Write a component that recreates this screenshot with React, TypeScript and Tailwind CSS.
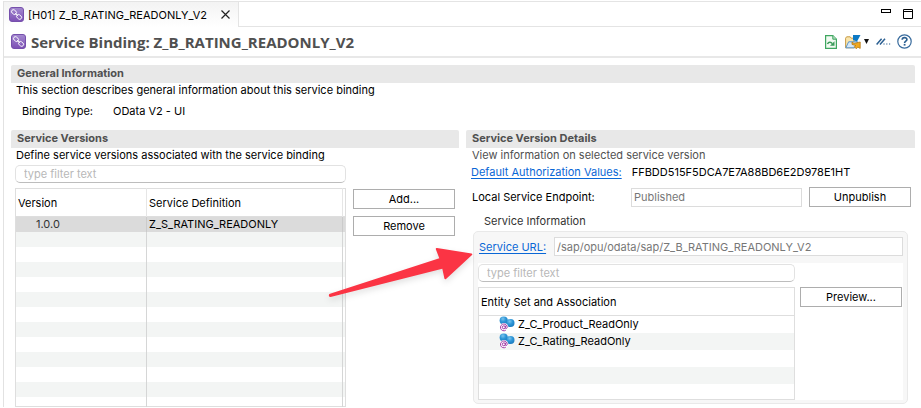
import React from "react";

const BUTTON =
  "flex h-5 w-[102px] shrink-0 items-center justify-center border border-[#adadad] bg-white text-[11px] leading-4 text-black";
const LINK = "shrink-0 text-[#0a67d6] underline underline-offset-2";
const SEARCH =
  "block h-[18px] w-full rounded-[5px] border border-[#e2e2e2] border-b-[#bdbdbd] bg-white px-2 text-[11px] leading-4 text-black placeholder:text-[#b8b8b8]";
const FIELD = "h-[19px] min-w-0 border border-[#dcdcdc] bg-white px-0.5 text-[11px] leading-4 text-[#777]";

function BindingIcon() {
  return (
    <svg width="15" height="15" viewBox="0 0 15 15" className="shrink-0" aria-hidden="true">
      <defs>
        <linearGradient id="violet" x1="0" y1="0" x2="0" y2="1">
          <stop offset="0" stopColor="#a48ad0" />
          <stop offset="1" stopColor="#7c4fb4" />
        </linearGradient>
      </defs>
      <rect x="0.5" y="0.5" width="14" height="14" rx="2.5" fill="url(#violet)" stroke="#7650ac" />
      <g fill="none" stroke="#fff" strokeWidth="0.9">
        <rect x="2.3" y="3.2" width="5.4" height="3.8" rx="1.9" transform="rotate(40 5 5.1)" />
        <rect x="7.4" y="8" width="5.4" height="3.8" rx="1.9" transform="rotate(40 10.1 9.9)" />
        <path d="M6 6.2 9.2 9" />
      </g>
    </svg>
  );
}

function EntityIcon() {
  return (
    <svg width="16" height="16" viewBox="0 0 16 16" className="shrink-0" aria-hidden="true">
      <defs>
        <radialGradient id="ball" cx="0.4" cy="0.3" r="0.7">
          <stop offset="0" stopColor="#7cc4ec" />
          <stop offset="0.5" stopColor="#2f97d8" />
          <stop offset="1" stopColor="#1c7cc0" />
        </radialGradient>
      </defs>
      <path d="m4 5 7 3" stroke="#4b9bd0" strokeWidth="1.5" />
      <circle cx="4.7" cy="4.5" r="4.1" fill="url(#ball)" />
      <circle cx="11.5" cy="7" r="4" fill="url(#ball)" />
      <circle cx="4.9" cy="11.3" r="4.2" fill="#fff" />
      <g fill="none" stroke="#a23aa6" strokeWidth="1">
        <circle cx="4.8" cy="11.3" r="1.5" />
        <path d="M6.4 9.7v2.1c0 1.1 1.8 1 1.8-.5 0-2-1.5-3.3-3.4-3.3a3.4 3.4 0 1 0 2 6.2" />
      </g>
    </svg>
  );
}

function SectionTitle({ children }: { children: React.ReactNode }) {
  return (
    <h2 className="h-[18px] rounded-t-[2px] bg-[#e8e8e8] px-1.5 text-[11px] leading-4 font-bold text-[#505050]">
      {children}
    </h2>
  );
}

function Tabs() {
  return (
    <div className="flex h-[26px] border-t border-[#e4e4e4]">
      <div className="flex w-[235px] items-center border-r border-[#e4e4e4] bg-linear-to-b from-[#f3f3f3] to-white pl-[5px]">
        <BindingIcon />
        <span className="ml-1 text-[11px] leading-4">[H01] Z_B_RATING_READONLY_V2</span>
        <button aria-label="Close tab" className="ml-auto mr-2">
          <svg width="9" height="9" viewBox="0 0 9 9">
            <path d="m.5.5 8 8m0-8-8 8" stroke="#222" strokeWidth="1.2" />
          </svg>
        </button>
      </div>
      <div className="flex flex-1 items-start justify-end gap-3 border-b border-[#e4e4e4] pt-[7px] pr-2">
        <button aria-label="Minimize">
          <svg width="10" height="4" viewBox="0 0 10 4" className="block">
            <rect x="0.5" y="0.5" width="9" height="3" fill="#fff" stroke="#000" />
          </svg>
        </button>
        <button aria-label="Maximize">
          <svg width="10" height="10" viewBox="0 0 10 10" className="block">
            <path d="M.5.5h9v9h-9zM.5 2.5h9" fill="#fff" stroke="#000" />
          </svg>
        </button>
      </div>
    </div>
  );
}

function Toolbar() {
  return (
    <div className="flex items-center">
      <button aria-label="Refresh">
        <svg width="12" height="14" viewBox="0 0 12 14" className="block">
          <path d="M.6.6h7.2l3.6 3.6v9.2H.6z" fill="#f2faf2" stroke="#3fa660" strokeWidth="1.2" />
          <path d="M7.8.6v3.6h3.6" fill="#b8dfc2" stroke="#3fa660" />
          <path d="M2.5 9C3.6 6.8 6 6.8 7.3 8.6" fill="none" stroke="#3b9b5a" strokeWidth="1.6" />
          <path d="M9.5 6.2v4.6H5z" fill="#3b9b5a" />
        </svg>
      </button>
      <button aria-label="Open with" className="ml-2 flex items-center gap-[3px]">
        <svg width="16" height="14" viewBox="0 0 16 14">
          <path d="M.6 12.8V3.2l1-1.4h3.6l1 1.4H9v9.6z" fill="#f9e5ad" stroke="#c79a45" />
          <path d="m.8 12.8 2.8-6h9l-2.8 6z" fill="#d5e8f8" stroke="#5a94c8" />
          <path d="M8 0h7.5L12 6.6 8 5z" fill="#0d79c4" />
          <path d="m7 7 2 1.4 6.2-1.4v6.4l-2.4-1.3-1.5 1.7-2-2 1.6-1.2L7 9.4z" fill="#f0a81e" stroke="#b87813" strokeWidth="0.8" />
        </svg>
        <svg width="5" height="5" viewBox="0 0 5 5">
          <path d="M0 0h5L2.5 5z" fill="#111" />
        </svg>
      </button>
      <button aria-label="Activate" className="ml-[7px]">
        <svg width="15" height="8" viewBox="0 0 15 8" className="block">
          <path d="M.6 6.5 5.6.8M4 6.5 9 .8" stroke="#2b5f91" strokeWidth="1.5" />
          <path d="M7.4 6h1.2M10.2 6h1.2M13 6h1.2" stroke="#2b5f91" strokeWidth="1.2" />
        </svg>
      </button>
      <button aria-label="Help" className="ml-1.5">
        <svg width="15" height="15" viewBox="0 0 15 15" className="block">
          <circle cx="7.5" cy="7.5" r="6.7" fill="#fff" stroke="#386b9d" strokeWidth="1.2" />
          <path d="M5.2 5.8c.1-3 4.8-2.7 4.7-.1-.1 1.5-2.3 1.5-2.3 3.2" fill="none" stroke="#2b5f91" strokeWidth="1.7" />
          <rect x="6.7" y="9.9" width="1.8" height="1.7" fill="#2b5f91" />
        </svg>
      </button>
    </div>
  );
}

const EMPTY_ROWS = [1, 2, 3, 4, 5, 6, 7, 8, 9, 10, 11];

function VersionsTable() {
  return (
    <table className="w-full table-fixed border-collapse border border-[#dedede]">
      <colgroup>
        <col className="w-[131px]" />
        <col />
        <col className="w-[3px]" />
      </colgroup>
      <thead>
        <tr className="h-7 border-b border-[#dedede] text-left leading-4">
          <th className="px-0.5 py-0 font-normal">Version</th>
          <th className="border-l border-[#e6e6e6] px-0.5 py-0 font-normal">Service Definition</th>
          <td className="border-l border-[#e6e6e6] p-0" />
        </tr>
      </thead>
      <tbody>
        <tr className="h-[15px] bg-[#dbdbdb] leading-[14px]">
          <td className="py-0 pl-5 text-[#333]">1.0.0</td>
          <td className="border-l border-[#cbcbcb] px-0.5 py-0">Z_S_RATING_READONLY</td>
          <td className="border-l border-[#cbcbcb] p-0" />
        </tr>
        {EMPTY_ROWS.map((row) => (
          <tr key={row} className="h-[15px] odd:bg-white even:bg-[#f3f5f4]">
            <td className="p-0" />
            <td className="border-l border-[#d5d6d6] p-0" />
            <td className="border-l border-[#d5d6d6] p-0" />
          </tr>
        ))}
        <tr className="h-[10px]">
          <td className="p-0" />
          <td className="border-l border-[#d5d6d6] p-0" />
          <td className="border-l border-[#d5d6d6] p-0" />
        </tr>
      </tbody>
    </table>
  );
}

function EntityTable() {
  return (
    <table className="w-full table-fixed border-collapse border border-[#dedede] bg-white">
      <thead>
        <tr className="h-7 border-b border-[#dedede] text-left leading-4">
          <th className="px-0.5 py-0 font-normal">Entity Set and Association</th>
        </tr>
      </thead>
      <tbody>
        {["Z_C_Product_ReadOnly", "Z_C_Rating_ReadOnly", "", ""].map((name, i) => (
          <tr key={i} className="h-[17px] even:bg-[#f3f5f4]">
            <td className="p-0">
              {name && (
                <div className="flex h-4 items-center gap-[3px] pl-5 leading-4">
                  <EntityIcon />
                  {name}
                </div>
              )}
            </td>
          </tr>
        ))}
        <tr className="h-4">
          <td className="p-0" />
        </tr>
      </tbody>
    </table>
  );
}

function ServiceVersions() {
  return (
    <section className="min-w-0">
      <SectionTitle>Service Versions</SectionTitle>
      <p className="px-[5px] leading-[14px]">Define service versions associated with the service binding</p>
      <div className="mt-[3px] flex gap-[7px] pr-1 pl-1">
        <div className="min-w-0 flex-1">
          <input aria-label="Filter versions" placeholder="type filter text" className={SEARCH} />
          <div className="mt-[5px]">
            <VersionsTable />
          </div>
        </div>
        <div className="flex flex-col gap-[7px] pt-6">
          <button className={BUTTON}>Add...</button>
          <button className={BUTTON}>Remove</button>
        </div>
      </div>
    </section>
  );
}

function VersionDetails() {
  return (
    <section className="min-w-0">
      <SectionTitle>Service Version Details</SectionTitle>
      <p className="px-1.5 leading-[14px] text-[#505050]">View information on selected service version</p>
      <div className="mt-0.5 flex items-center gap-2.5 pl-[5px] leading-4">
        <a href="#authorization" className={LINK}>
          Default Authorization Values:
        </a>
        <span>FFBDD515F5DCA7E7A88BD6E2D978E1HT</span>
      </div>
      <div className="mt-[7px] flex items-center pr-1 pl-1.5">
        <label htmlFor="endpoint" className="w-[159px] shrink-0 leading-4">
          Local Service Endpoint:
        </label>
        <input id="endpoint" readOnly value="Published" className={FIELD + " flex-1"} />
        <button className={BUTTON + " ml-[7px]"}>Unpublish</button>
      </div>
      <h3 className="mt-1.5 pl-[18px] leading-4 text-[#333]">Service Information</h3>
      <div className="mt-0.5 mr-[7px] ml-[7px] rounded-[5px] border border-[#e9e9e9] bg-[#f7f7f7] px-1 pt-[5px] pb-[3px]">
        <div className="flex items-center gap-2 pl-px leading-4">
          <a href="#service-url" className={LINK}>
            Service URL:
          </a>
          <input
            aria-label="Service URL"
            readOnly
            value="/sap/opu/odata/sap/Z_B_RATING_READONLY_V2"
            className={FIELD + " flex-1"}
          />
        </div>
        <div className="mt-[7px] flex gap-[5px] bg-white pt-px pr-px">
          <div className="min-w-0 flex-1">
            <input aria-label="Filter entity sets" placeholder="type filter text" className={SEARCH} />
            <div className="mt-[5px]">
              <EntityTable />
            </div>
          </div>
          <button className={BUTTON + " mt-[23px]"}>Preview...</button>
        </div>
      </div>
    </section>
  );
}

function PointerArrow() {
  return (
    <svg
      width="160"
      height="70"
      viewBox="320 240 160 70"
      className="pointer-events-none absolute top-60 left-80 drop-shadow-md"
      aria-hidden="true"
    >
      <path
        d="M330 293.8 439.3 258.3 435.7 249Q435.8 247.8 437 248L471.6 253.6Q472.8 254.2 472 255L446 279Q444.8 279.8 444.4 278.6L442.3 268.8 330.6 297Q329 297 328.8 295.4 328.8 294.2 330 293.8z"
        fill="#fb3444"
      />
    </svg>
  );
}

export default function App() {
  return (
    <div className="relative bg-white pt-px pl-[3px] font-['Inter','Liberation_Sans',sans-serif] text-[11px] text-black">
      <div className="border-l border-[#e2e2e2]">
        <Tabs />
        <header className="flex h-[31px] items-center justify-between border-b-2 border-[#e8e8e8] pr-[9px] pl-[7px]">
          <div className="flex items-center gap-[5px]">
            <BindingIcon />
            <h1 className="font-['Open_Sans','Noto_Sans',sans-serif] text-[15px] leading-5 font-bold text-[#505050]">
              Service Binding: Z_B_RATING_READONLY_V2
            </h1>
          </div>
          <Toolbar />
        </header>
        <main className="pt-[7px] pr-1.5 pl-[7px]">
          <section>
            <SectionTitle>General Information</SectionTitle>
            <p className="px-[5px] leading-[14px]">
              This section describes general information about this service binding
            </p>
            <dl className="mt-1.5 flex pl-[11px] leading-4">
              <dt className="w-[91px]">Binding Type:</dt>
              <dd>OData V2 - UI</dd>
            </dl>
          </section>
          <div className="mt-[11px] grid grid-cols-[448fr_449fr] gap-[7px]">
            <ServiceVersions />
            <VersionDetails />
          </div>
        </main>
      </div>
      <PointerArrow />
    </div>
  );
}
